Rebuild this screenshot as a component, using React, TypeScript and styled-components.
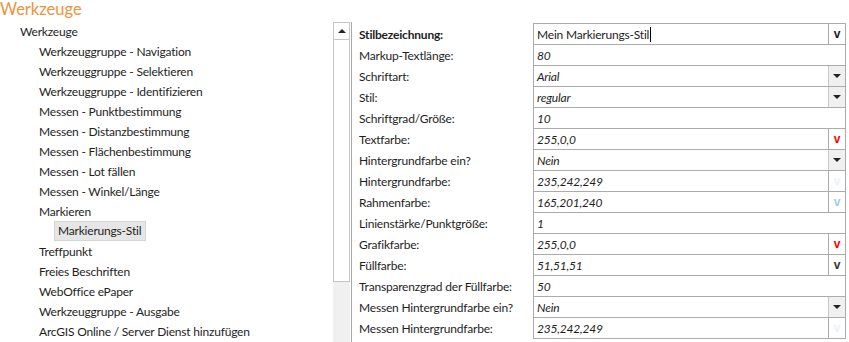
import React from 'react';
import styled, { createGlobalStyle } from 'styled-components';

const Global = createGlobalStyle`
  html, body { margin: 0; padding: 0; background: #fff; }
  body {
    font-family: Lato, "Noto Sans", sans-serif;
    font-size: 12px;
    letter-spacing: -0.2px;
    color: #1e1e1e;
  }
`;

const Page = styled.div`
  width: 849px;
  height: 342px;
  overflow: hidden;
  display: flex;
  flex-direction: column;
`;

const Title = styled.div`
  height: 21px;
  font-size: 16.5px;
  line-height: 21px;
  letter-spacing: 0;
  color: #f0923a;
  margin-top: -1px;
  margin-bottom: 1px;
`;

const Main = styled.div`
  flex: 1;
  display: flex;
  min-height: 0;
`;

const Tree = styled.ul`
  width: 333px;
  margin: 0;
  padding: 0;
  list-style: none;
`;

const TreeRow = styled.li<{ $level: number }>`
  height: 20px;
  display: flex;
  align-items: center;
  padding-left: ${p => 20 + p.$level * 19}px;
`;

const TreeLabel = styled.span<{ $selected?: boolean }>`
  line-height: 17px;
  white-space: nowrap;
  ${p => p.$selected && `
    background: #e6e6e6;
    border: 1px solid #d4d4d4;
    padding: 0 4px 1px 3px;
    margin-left: -4px;
  `}
`;

const ScrollColumn = styled.div`
  width: 17px;
  display: flex;
  flex-direction: column;
  margin-top: 1px;
`;

const ScrollFrame = styled.div`
  height: 260px;
  box-sizing: border-box;
  border: 1px solid #c6c6c6;
  background: #fff;
`;

const ScrollButton = styled.div`
  height: 17px;
  box-sizing: border-box;
  border-bottom: 1px solid #c6c6c6;
  display: flex;
  align-items: center;
  justify-content: center;
`;

const ScrollRest = styled.div`
  flex: 1;
  background: #f0f0f0;
`;

const Triangle = styled.span<{ $up?: boolean }>`
  width: 0;
  height: 0;
  border-left: 4px solid transparent;
  border-right: 4px solid transparent;
  ${p => (p.$up ? 'border-bottom: 4px solid #222;' : 'border-top: 4px solid #222;')}
`;

const Grid = styled.div`
  flex: 1;
  margin-left: 1px;
  margin-top: 1px;
  padding-top: 1px;
  border-left: 1px solid #a8a8a8;
  display: flex;
  flex-direction: column;
`;

const Row = styled.div`
  display: flex;
  height: 21px;
`;

const Label = styled.div<{ $bold?: boolean }>`
  width: 181px;
  padding-left: 7px;
  box-sizing: border-box;
  display: flex;
  align-items: center;
  padding-top: 2px;
  font-weight: ${p => (p.$bold ? 700 : 400)};
  white-space: nowrap;
`;

const Cell = styled.div<{ $last?: boolean }>`
  width: 313px;
  box-sizing: border-box;
  border: 1px solid #ababab;
  border-bottom: ${p => (p.$last ? '1px solid #ababab' : 'none')};
  height: ${p => (p.$last ? 22 : 21)}px;
  display: flex;
`;

const Value = styled.div<{ $plain?: boolean }>`
  flex: 1;
  display: flex;
  align-items: center;
  padding-left: 3px;
  font-style: ${p => (p.$plain ? 'normal' : 'italic')};
  white-space: nowrap;
`;

const Caret = styled.span`
  display: inline-block;
  width: 1px;
  height: 15px;
  background: #000;
  margin-left: 1px;
`;

const Side = styled.div<{ $kind: 'drop' | 'color' }>`
  width: 17px;
  box-sizing: border-box;
  display: flex;
  align-items: center;
  justify-content: center;
  border-left: 1px solid ${p => (p.$kind === 'drop' ? '#c8c8c8' : '#ababab')};
  background: ${p => (p.$kind === 'drop' ? '#f0f0f0' : '#fff')};
`;

const VMark = styled.span<{ $color: string }>`
  font-family: "Liberation Sans", Arial, sans-serif;
  font-weight: 700;
  font-size: 12px;
  letter-spacing: 0;
  color: ${p => p.$color};
  line-height: 1;
`;

const treeItems: [string, number, boolean?][] = [
  ['Werkzeuge', 0],
  ['Werkzeuggruppe - Navigation', 1],
  ['Werkzeuggruppe - Selektieren', 1],
  ['Werkzeuggruppe - Identifizieren', 1],
  ['Messen - Punktbestimmung', 1],
  ['Messen - Distanzbestimmung', 1],
  ['Messen - Flächenbestimmung', 1],
  ['Messen - Lot fällen', 1],
  ['Messen - Winkel/Länge', 1],
  ['Markieren', 1],
  ['Markierungs-Stil', 2, true],
  ['Treffpunkt', 1],
  ['Freies Beschriften', 1],
  ['WebOffice ePaper', 1],
  ['Werkzeuggruppe - Ausgabe', 1],
  ['ArcGIS Online / Server Dienst hinzufügen', 1],
];

type Prop = {
  label: string;
  value: string;
  kind: 'plain' | 'drop' | 'color' | 'title';
  color?: string;
};

const props: Prop[] = [
  { label: 'Stilbezeichnung:', value: 'Mein Markierungs-Stil', kind: 'title', color: '#1a1a1a' },
  { label: 'Markup-Textlänge:', value: '80', kind: 'plain' },
  { label: 'Schriftart:', value: 'Arial', kind: 'drop' },
  { label: 'Stil:', value: 'regular', kind: 'drop' },
  { label: 'Schriftgrad/Größe:', value: '10', kind: 'plain' },
  { label: 'Textfarbe:', value: '255,0,0', kind: 'color', color: 'rgb(255,0,0)' },
  { label: 'Hintergrundfarbe ein?', value: 'Nein', kind: 'drop' },
  { label: 'Hintergrundfarbe:', value: '235,242,249', kind: 'color', color: 'rgb(235,242,249)' },
  { label: 'Rahmenfarbe:', value: '165,201,240', kind: 'color', color: 'rgb(165,201,240)' },
  { label: 'Linienstärke/Punktgröße:', value: '1', kind: 'plain' },
  { label: 'Grafikfarbe:', value: '255,0,0', kind: 'color', color: 'rgb(255,0,0)' },
  { label: 'Füllfarbe:', value: '51,51,51', kind: 'color', color: 'rgb(51,51,51)' },
  { label: 'Transparenzgrad der Füllfarbe:', value: '50', kind: 'plain' },
  { label: 'Messen Hintergrundfarbe ein?', value: 'Nein', kind: 'drop' },
  { label: 'Messen Hintergrundfarbe:', value: '235,242,249', kind: 'color', color: 'rgb(235,242,249)' },
];

export default function App() {
  return (
    <Page>
      <Global />
      <Title>Werkzeuge</Title>
      <Main>
        <Tree>
          {treeItems.map(([text, level, sel]) => (
            <TreeRow key={text} $level={level}>
              <TreeLabel $selected={sel}>{text}</TreeLabel>
            </TreeRow>
          ))}
        </Tree>
        <ScrollColumn>
          <ScrollFrame>
            <ScrollButton>
              <Triangle $up />
            </ScrollButton>
          </ScrollFrame>
          <ScrollRest />
        </ScrollColumn>
        <Grid>
          {props.map((p, i) => (
            <Row key={p.label}>
              <Label $bold={p.kind === 'title'}>{p.label}</Label>
              <Cell $last={i === props.length - 1}>
                <Value $plain={p.kind === 'title'}>
                  {p.value}
                  {p.kind === 'title' && <Caret />}
                </Value>
                {p.kind === 'drop' && (
                  <Side $kind="drop">
                    <Triangle />
                  </Side>
                )}
                {(p.kind === 'color' || p.kind === 'title') && (
                  <Side $kind="color">
                    <VMark $color={p.color!}>v</VMark>
                  </Side>
                )}
              </Cell>
            </Row>
          ))}
        </Grid>
      </Main>
    </Page>
  );
}
